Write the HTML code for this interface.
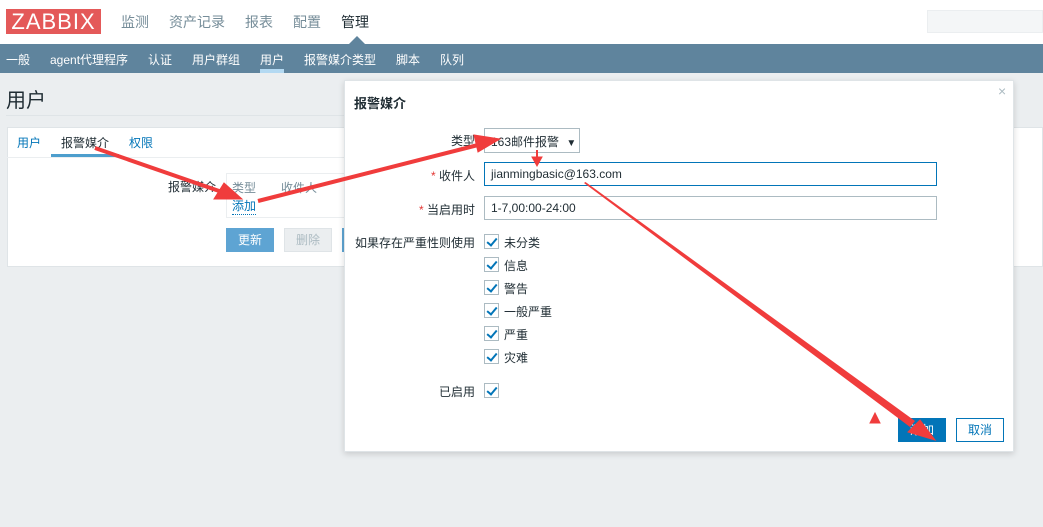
<!DOCTYPE html>
<html><head><meta charset="utf-8"><style>
*{box-sizing:border-box;margin:0;padding:0}
body{width:1043px;height:527px;overflow:hidden;background:#ebeef0;font-family:"Liberation Sans","Noto Sans CJK SC",sans-serif;font-size:12px;color:#1f2c33;position:relative}
.abs{position:absolute}
.top{position:absolute;left:0;top:0;width:1043px;height:44px;background:#fff}
.logo{left:6px;top:9px;width:95px;height:25px;background:#e45959;color:#fff;font-size:22px;line-height:25px;text-align:center;letter-spacing:1px}
.nav1 span{position:absolute;top:12px;font-size:14px;color:#768d99}
.sub{position:absolute;left:0;top:44px;width:1043px;height:29px;background:#5f849d}
.sub span{position:absolute;top:7px;color:#fff;font-size:12px}
.lbl{position:absolute;text-align:right;width:200px;font-size:12px}
.cb{position:absolute;left:484px;width:15px;height:15px;border:1px solid #acbbc2;background:#fff}
.cb:after{content:"";position:absolute;left:4px;top:1px;width:4px;height:8px;border:solid #0275b8;border-width:0 2px 2px 0;transform:rotate(40deg)}
.cbt{position:absolute;left:504px}
</style></head><body>
<div class="top"></div>
<div class="abs logo">ZABBIX</div>
<div class="nav1"><span style="left:121px">监测</span><span style="left:169px">资产记录</span><span style="left:245px">报表</span><span style="left:293px">配置</span><span style="left:341px;color:#1f2c33">管理</span></div>
<div class="abs" style="left:927px;top:10px;width:116px;height:23px;background:#f4f6f7;border:1px solid #ebeef0"></div>
<div class="sub"><span style="left:6px">一般</span><span style="left:50px">agent代理程序</span><span style="left:148px">认证</span><span style="left:192px">用户群组</span><span style="left:260px">用户</span><span style="left:304px">报警媒介类型</span><span style="left:396px">脚本</span><span style="left:440px">队列</span></div>
<div class="abs" style="left:260px;top:69px;width:24px;height:4px;background:#b3d9f2"></div>
<div class="abs" style="left:349px;top:36px;width:0;height:0;border:8px solid transparent;border-bottom-color:#5f849d;border-top:0"></div>
<div class="abs" style="left:6px;top:84px;font-size:20px;color:#1f2c33">用户</div>
<div class="abs" style="left:6px;top:115px;width:340px;height:1px;background:#dfe4e7"></div>
<div class="abs" style="left:7px;top:127px;width:1036px;height:140px;background:#fff;border:1px solid #dfe4e7"></div>
<div class="abs" style="left:7px;top:157px;width:340px;height:1px;background:#ebeef0"></div>
<div class="abs" style="left:17px;top:134px;color:#0275b8">用户</div>
<div class="abs" style="left:61px;top:134px">报警媒介</div>
<div class="abs" style="left:51px;top:154px;width:68px;height:3px;background:#0275b8;opacity:.7"></div>
<div class="abs" style="left:129px;top:134px;color:#0275b8">权限</div>
<div class="abs" style="left:168px;top:178px">报警媒介</div>
<div class="abs" style="left:226px;top:173px;width:120px;height:45px;border:1px solid #ebeef0"></div>
<div class="abs" style="left:232px;top:179px;color:#768d99">类型</div>
<div class="abs" style="left:281px;top:179px;color:#768d99">收件人</div>
<div class="abs" style="left:232px;top:197px;color:#0275b8;border-bottom:1px dotted #0275b8">添加</div>
<div class="abs" style="left:226px;top:228px;width:48px;height:24px;background:#5ea4d3;color:#fff;text-align:center;line-height:24px">更新</div>
<div class="abs" style="left:284px;top:228px;width:48px;height:24px;background:#ebeef0;border:1px solid #dfe4e7;color:#acbbc2;text-align:center;line-height:22px">删除</div>
<div class="abs" style="left:342px;top:228px;width:4px;height:24px;background:#5ea4d3"></div>

<div class="abs" style="left:344px;top:80px;width:670px;height:372px;background:#fff;border:1px solid #dfe4e7;box-shadow:0 2px 6px rgba(0,0,0,.15)"></div>
<div class="abs" style="left:998px;top:83px;color:#acbbc2;font-size:14px">×</div>
<div class="abs" style="left:354px;top:93px;font-size:13px;font-weight:bold">报警媒介</div>
<div class="lbl" style="left:275px;top:132px">类型</div>
<div class="abs" style="left:484px;top:128px;width:96px;height:25px;border:1px solid #acbbc2;padding:4px 0 0 6px">163邮件报警 <span style="font-size:10px;margin-left:4px">▼</span></div>
<div class="lbl" style="left:275px;top:167px"><span style="color:#e33734">*</span> 收件人</div>
<div class="abs" style="left:484px;top:162px;width:453px;height:24px;border:1px solid #0275b8;padding:4px 0 0 6px">jianmingbasic@163.com</div>
<div class="lbl" style="left:275px;top:201px"><span style="color:#e33734">*</span> 当启用时</div>
<div class="abs" style="left:484px;top:196px;width:453px;height:24px;border:1px solid #acbbc2;padding:4px 0 0 6px">1-7,00:00-24:00</div>
<div class="lbl" style="left:275px;top:234px">如果存在严重性则使用</div>
<div class="cb" style="top:234px"></div><div class="cbt" style="top:234px">未分类</div>
<div class="cb" style="top:257px"></div><div class="cbt" style="top:257px">信息</div>
<div class="cb" style="top:280px"></div><div class="cbt" style="top:280px">警告</div>
<div class="cb" style="top:303px"></div><div class="cbt" style="top:303px">一般严重</div>
<div class="cb" style="top:326px"></div><div class="cbt" style="top:326px">严重</div>
<div class="cb" style="top:349px"></div><div class="cbt" style="top:349px">灾难</div>
<div class="lbl" style="left:275px;top:383px">已启用</div>
<div class="cb" style="top:383px"></div>
<div class="abs" style="left:898px;top:418px;width:48px;height:24px;background:#0275b8;color:#fff;text-align:center;line-height:24px">添加</div>
<div class="abs" style="left:956px;top:418px;width:48px;height:24px;border:1px solid #0275b8;color:#0275b8;text-align:center;line-height:22px">取消</div>

<svg class="abs" style="left:0;top:0" width="1043" height="527">
<g fill="#f03c3c" stroke="#f03c3c">
<line x1="95" y1="148" x2="222" y2="192" stroke-width="4"/>
<polygon points="242,199 214,199 224,183"/>
<line x1="258" y1="201" x2="478" y2="145" stroke-width="4"/>
<polygon points="500,139 478,152 474,135"/>
<line x1="537" y1="150" x2="537" y2="158" stroke-width="2"/>
<polygon points="532,157 542,157 537,166"/>
<polygon points="584,183 585.5,182 915,421 910,427" stroke="none"/>
<polygon points="935,440 908,432 920,420"/>
<polygon points="870,423 880,423 875,413"/>
</g>
</svg>
</body></html>
